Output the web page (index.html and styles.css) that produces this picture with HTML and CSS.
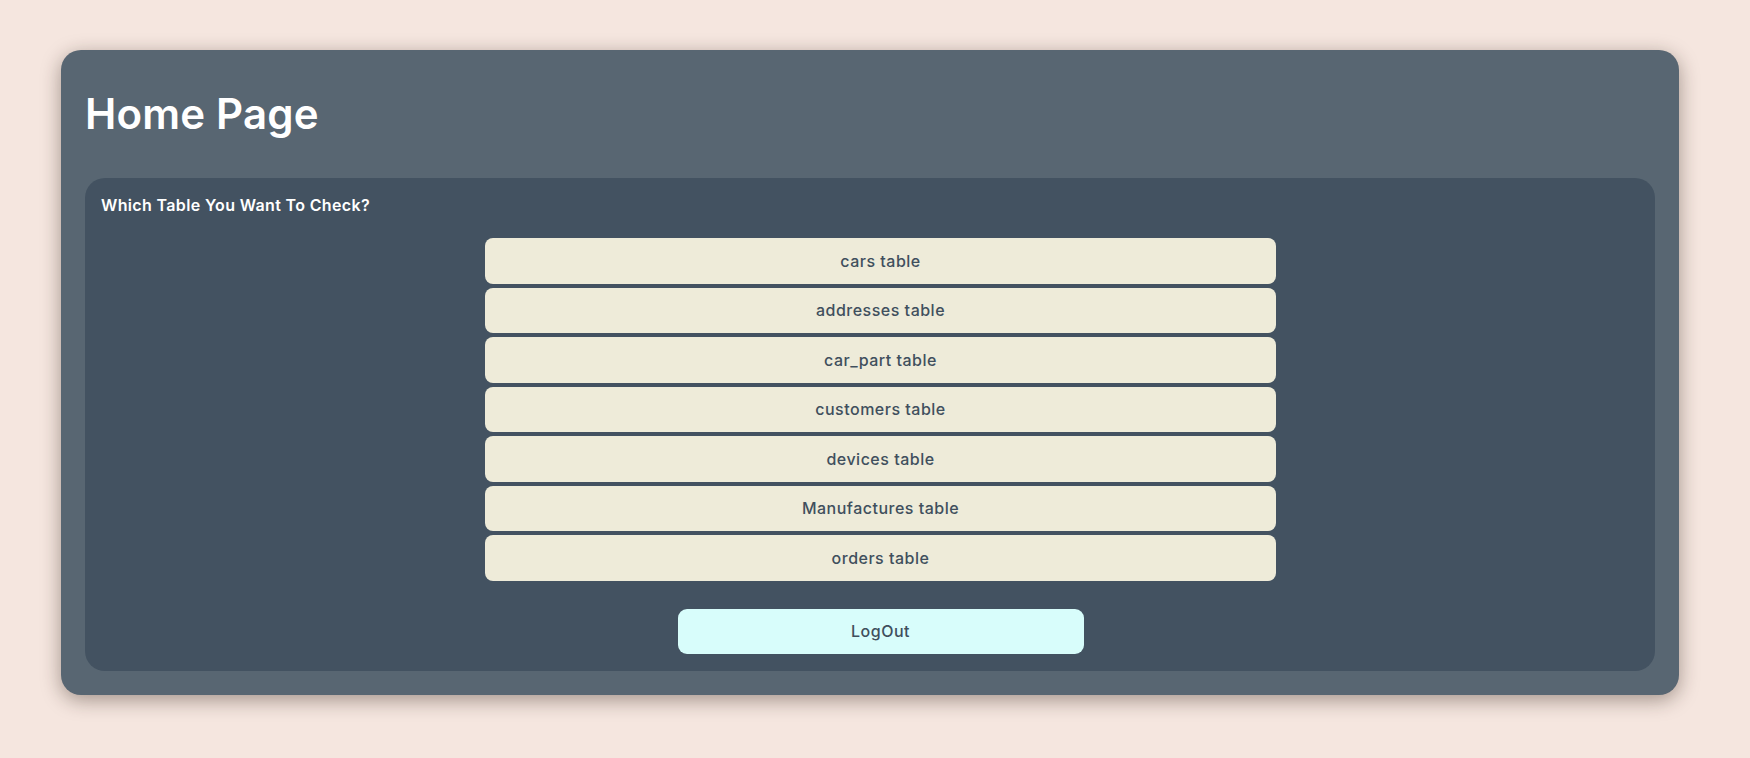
FILE: index.html
```html
<!DOCTYPE html>
<html lang="en">
<head>
<meta charset="utf-8">
<title>Home Page</title>
<link rel="stylesheet" href="styles.css">
</head>
<body>
  <main class="card">
    <h1 class="title">Home Page</h1>
    <section class="panel">
      <p class="question">Which Table You Want To Check?</p>
      <div class="choices">
        <button class="choice">cars table</button>
        <button class="choice">addresses table</button>
        <button class="choice">car_part table</button>
        <button class="choice">customers table</button>
        <button class="choice">devices table</button>
        <button class="choice">Manufactures table</button>
        <button class="choice">orders table</button>
      </div>
      <div class="logout-row">
        <button class="logout">LogOut</button>
      </div>
    </section>
  </main>
</body>
</html>
```

FILE: styles.css
```css
* { box-sizing: border-box; }

html, body {
  margin: 0;
  padding: 0;
  background: #f5e6df;
  font-family: Inter, "Open Sans", "Liberation Sans", sans-serif;
}

body {
  min-height: 758px;
  padding: 50px 71px 0 61px;
}

.card {
  background: #586672;
  border-radius: 20px;
  box-shadow: 0 5px 20px rgba(40, 25, 15, 0.4);
  padding: 0 24px 24px 24px;
  height: 645px;
}

.title {
  margin: 0;
  height: 128px;
  padding-top: 34px;
  padding-left: 0;
  font-size: 42px;
  line-height: 60px;
  font-weight: 600;
  letter-spacing: 0.2px;
  color: #ffffff;
}

.panel {
  background: #435261;
  border-radius: 20px;
  padding: 15px 16px 17px 16px;
  height: 493px;
}

.question {
  margin: 0;
  font-size: 16px;
  line-height: 24px;
  font-weight: 600;
  letter-spacing: 0.35px;
  color: #ffffff;
}

.choices {
  display: flex;
  flex-direction: column;
  align-items: center;
  gap: 4px;
  margin-top: 21px;
  padding-left: 21px;
}

.choice {
  width: 791px;
  height: 45.5px;
  border: none;
  border-radius: 8px;
  background: #eeebd9;
  color: #404f5d;
  font-family: inherit;
  font-size: 16px;
  font-weight: 500;
  letter-spacing: 0.5px;
  cursor: pointer;
}

.logout-row {
  display: flex;
  justify-content: center;
  margin-top: 28px;
  padding-left: 21px;
}

.logout {
  width: 406px;
  height: 45px;
  border: none;
  border-radius: 9px;
  background: #d8fdfb;
  color: #404f5d;
  font-family: inherit;
  font-size: 16px;
  font-weight: 500;
  letter-spacing: 0.5px;
  cursor: pointer;
}
```
